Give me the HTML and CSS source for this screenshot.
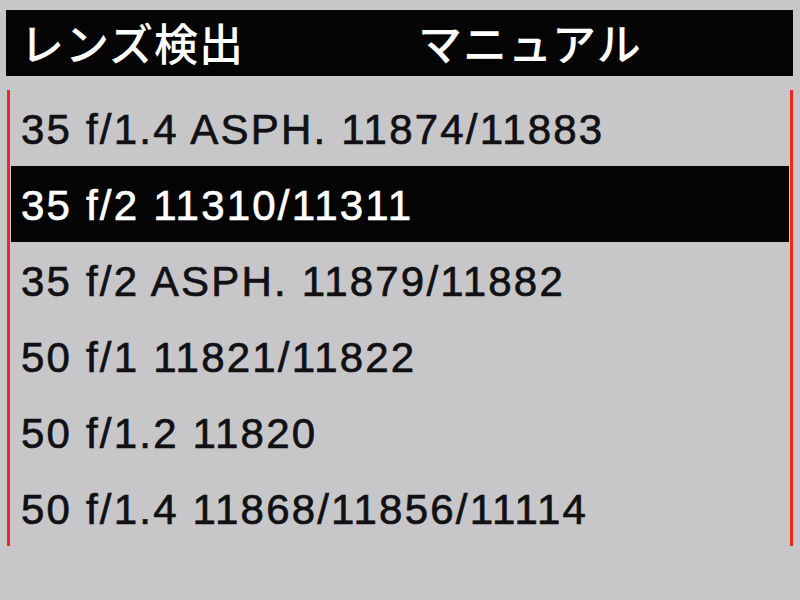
FILE: index.html
```html
<!DOCTYPE html>
<html lang="ja">
<head>
<meta charset="utf-8">
<title>レンズ検出</title>
<link rel="stylesheet" href="styles.css">
</head>
<body>
<div class="screen">
  <header class="title-bar">
    <span class="title">レンズ検出</span>
    <span class="mode">マニュアル</span>
  </header>
  <ul class="lens-list">
    <li class="row">35 f/1.4 ASPH. 11874/11883</li>
    <li class="row selected">35 f/2 11310/11311</li>
    <li class="row">35 f/2 ASPH. 11879/11882</li>
    <li class="row">50 f/1 11821/11822</li>
    <li class="row">50 f/1.2 11820</li>
    <li class="row">50 f/1.4 11868/11856/11114</li>
  </ul>
</div>
</body>
</html>
```
FILE: styles.css
```css
html, body {
  margin: 0;
  padding: 0;
}
body {
  width: 800px;
  height: 600px;
  overflow: hidden;
  background: #c7c7c9;
  font-family: "Liberation Sans", Arial, sans-serif;
}
.screen {
  padding-top: 10px;
}
.title-bar {
  margin-left: 6px;
  width: 787px;
  height: 66px;
  background: #050505;
  color: #ffffff;
  display: grid;
  grid-template-columns: 398px auto;
  align-items: center;
  padding-left: 14px;
  box-sizing: border-box;
  font-family: "Noto Sans CJK JP", sans-serif;
  font-weight: 500;
  font-size: 44px;
  letter-spacing: 1px;
  line-height: 1;
}
.title, .mode {
  display: block;
  padding-bottom: 2px;
}
.lens-list {
  list-style: none;
  margin: 14px 0 0 7px;
  padding: 0 1px;
  width: 786px;
  box-sizing: border-box;
  border-left: 3px solid #f2261c;
  border-right: 3px solid #f2261c;
}
.row {
  height: 76px;
  box-sizing: border-box;
  padding: 3px 0 0 10px;
  line-height: 73px;
  font-size: 42px;
  letter-spacing: 2.2px;
  color: #111114;
  -webkit-text-stroke: 0.7px #111114;
  white-space: nowrap;
}
.row.selected {
  background: #040404;
  color: #ffffff;
  -webkit-text-stroke: 0.7px #ffffff;
}
```
